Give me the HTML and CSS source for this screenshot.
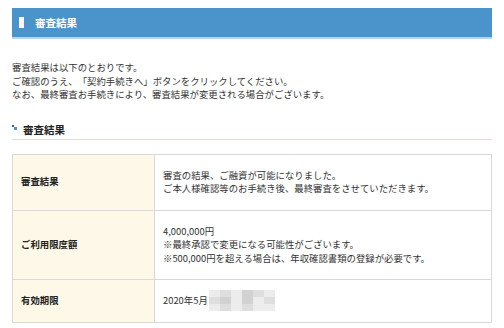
FILE: index.html
```html
<!DOCTYPE html>
<html lang="ja">
<head>
    <meta charset="UTF-8">
    <meta name="viewport" content="width=device-width, initial-scale=1.0">
    <title>審査結果</title>
    <link rel="stylesheet" href="styles.css">
</head>
<body>

    <div class="page-title">
        <span class="title-mark"></span>
        <h1>審査結果</h1>
    </div>

    <p class="intro">
        審査結果は以下のとおりです。<br>
        ご確認のうえ、「契約手続きへ」ボタンをクリックしてください。<br>
        なお、最終審査お手続きにより、審査結果が変更される場合がございます。
    </p>

    <h2 class="section-title">
        <svg class="section-mark" width="5" height="5" viewBox="0 0 5 5">
            <rect x="0" y="0" width="2" height="2" fill="#2a5f8f"/>
            <rect x="2" y="2" width="3" height="3" fill="#4b93cb"/>
        </svg>
        審査結果
    </h2>

    <table class="result-table">
        <tr>
            <th>審査結果</th>
            <td>審査の結果、ご融資が可能になりました。<br>ご本人様確認等のお手続き後、最終審査をさせていただきます。</td>
        </tr>
        <tr>
            <th>ご利用限度額</th>
            <td>4,000,000円<br>※最終承認で変更になる可能性がございます。<br>※500,000円を超える場合は、年収確認書類の登録が必要です。</td>
        </tr>
        <tr>
            <th>有効期限</th>
            <td>2020年5月<span class="mosaic"><i class="m1"></i><i class="m2"></i><i class="m1"></i><i class="m3"></i><i class="m2"></i><i class="m1"></i><i class="m2"></i><i class="m3"></i><i class="m1"></i><i class="m3"></i><i class="m1"></i><i class="m2"></i><i class="m1"></i><i class="m2"></i><i class="m1"></i><i class="m2"></i><i class="m1"></i><i class="m1"></i></span></td>
        </tr>
    </table>

</body>
</html>
```

FILE: styles.css
```css
body {
    font-family: "Noto Sans CJK JP", "Noto Sans", sans-serif;
    font-size: 9.4px;
    line-height: 13.5px;
    text-spacing-trim: space-all;
    color: #333;
    background: #fff;
    margin: 0;
    padding: 8px 12px;
}

.page-title {
    display: flex;
    align-items: center;
    height: 29px;
    padding-left: 7px;
    background: #4b93cb;
    border-bottom: 2px solid #b5d5ee;
}

.title-mark {
    width: 5px;
    height: 11px;
    background: #fff;
    margin-right: 11px;
}

.page-title h1 {
    margin: 0;
    font-size: 10.5px;
    font-weight: bold;
    color: #fff;
}

.intro {
    margin: 22px 0 0;
}

.section-title {
    display: flex;
    align-items: center;
    margin: 21px 0 0;
    padding-bottom: 2px;
    font-size: 10.5px;
    line-height: 14px;
    font-weight: bold;
    color: #222;
    border-bottom: 1px solid #cfe2ef;
}

.section-mark {
    margin: 0 6px 4px 0;
}

.result-table {
    width: 100%;
    margin-top: 14px;
    border-collapse: collapse;
}

.result-table th,
.result-table td {
    border: 1px solid #d9d9d9;
    padding: 14px 8px;
    text-align: left;
    vertical-align: middle;
}

.result-table th {
    width: 125px;
    background: #fdf8e7;
    font-weight: bold;
    color: #222;
}

.mosaic {
    display: inline-grid;
    grid-template-columns: repeat(6, 11px);
    grid-auto-rows: 7px;
    height: 22px;
    margin: -5px 0 -5px 1px;
    vertical-align: middle;
}

.mosaic i {
    display: block;
}

.m1 { background: #ececec; }
.m2 { background: #dedede; }
.m3 { background: #d2d2d2; }
```
